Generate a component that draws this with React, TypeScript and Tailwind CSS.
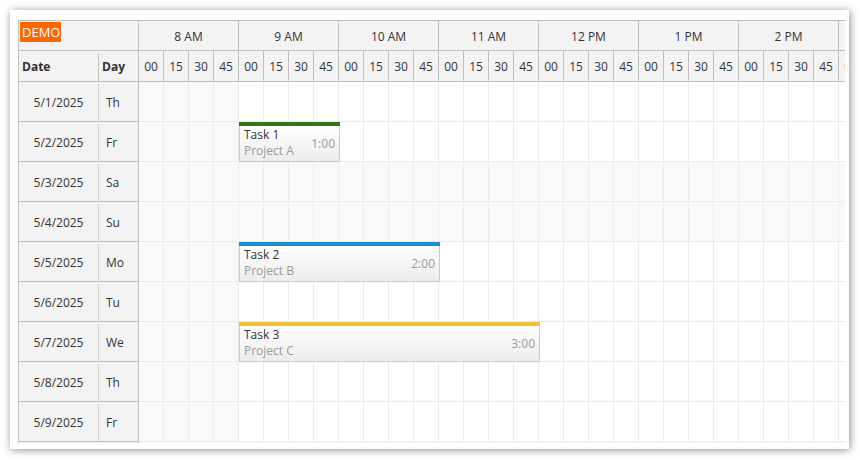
import React from "react";

const rows: [string, string, boolean][] = [
  ["5/1/2025", "Th", false],
  ["5/2/2025", "Fr", false],
  ["5/3/2025", "Sa", true],
  ["5/4/2025", "Su", true],
  ["5/5/2025", "Mo", false],
  ["5/6/2025", "Tu", false],
  ["5/7/2025", "We", false],
  ["5/8/2025", "Th", false],
  ["5/9/2025", "Fr", false],
  ["5/10/2025", "Sa", true],
];

const hours = ["8 AM", "9 AM", "10 AM", "11 AM", "12 PM", "1 PM", "2 PM", "3 PM"];
const minutes = ["00", "15", "30", "45"];

type Ev = { row: number; start: number; len: number; name: string; project: string; dur: string; color: string };
const events: Ev[] = [
  { row: 1, start: 4, len: 4, name: "Task 1", project: "Project A", dur: "1:00", color: "bg-[#38761d]" },
  { row: 4, start: 4, len: 8, name: "Task 2", project: "Project B", dur: "2:00", color: "bg-[#1a8fd6]" },
  { row: 6, start: 4, len: 12, name: "Task 3", project: "Project C", dur: "3:00", color: "bg-[#f1c232]" },
];

function Event({ ev }: { ev: Ev }) {
  return (
    <div
      className="absolute top-0 flex h-[40px] flex-col"
      style={{ left: ev.start * 25, width: ev.len * 25 + 1 }}
    >
      <div className={`h-[4px] shrink-0 ${ev.color}`} />
      <div className="flex flex-1 items-center justify-between border-x border-b border-[#c8c8c8] bg-gradient-to-b from-white to-[#ececec] pl-[4px] pr-[4px]">
        <div className="flex flex-col self-start pt-[1px] leading-[16px]">
          <span className="text-[#333]">{ev.name}</span>
          <span className="text-[#9a9a9a]">{ev.project}</span>
        </div>
        <span className="pt-[1px] text-[#9a9a9a]">{ev.dur}</span>
      </div>
    </div>
  );
}

export default function App() {
  return (
    <div
      className="h-[460px] w-[860px] bg-white p-[10px] text-[12px]"
      style={{ fontFamily: '"Open Sans", "Noto Sans", sans-serif' }}
    >
      <div className="h-[439px] w-[839px] bg-white pl-[8px] pt-[10px] shadow-[1px_1px_8px_rgba(0,0,0,0.45)]">
        <div className="h-[423px] w-[827px] overflow-hidden">
          <div className="flex w-max flex-col border-l border-t border-[#c0c0c0]">
            {/* header */}
            <div className="flex">
              <div className="flex w-[120px] shrink-0 flex-col border-r border-[#c0c0c0] bg-[#f3f3f3]">
                <div className="h-[30px] border-b border-[#c0c0c0] pl-[1px] pt-[1px]">
                  <span className="inline-block h-[20px] w-[41px] bg-[#ff6600] pl-[2px] text-[13px] leading-[20px] text-white">DEMO</span>
                </div>
                <div className="flex h-[31px] border-b border-[#c0c0c0] pt-[2px] font-bold text-[#333]">
                  <div className="flex w-[80px] items-center border-r border-[#c0c0c0] pl-[3px]">Date</div>
                  <div className="flex flex-1 items-center pl-[3px]">Day</div>
                </div>
              </div>
              <div className="flex">
                {hours.map((h) => (
                  <div key={h} className="flex w-[100px] shrink-0 flex-col bg-[#f3f3f3] text-[#333]">
                    <div className="flex h-[30px] items-center justify-center border-b border-r border-[#c0c0c0] pt-[2px]">{h}</div>
                    <div className="flex h-[31px] border-b border-[#c0c0c0]">
                      {minutes.map((m) => (
                        <div key={m} className="flex w-[25px] items-center justify-center border-r border-[#c0c0c0] pt-[2px]">
                          {m}
                        </div>
                      ))}
                    </div>
                  </div>
                ))}
              </div>
            </div>
            {/* rows */}
            {rows.map(([date, day, weekend], ri) => (
              <div key={date} className="flex h-[40px]">
                <div className="flex w-[120px] shrink-0 border-b border-r border-[#c0c0c0] bg-[#f3f3f3] pt-[2px] text-[#333]">
                  <div className="flex w-[80px] items-center justify-center border-r border-[#d4d4d4]">{date}</div>
                  <div className="flex flex-1 items-center pl-[7px]">{day}</div>
                </div>
                <div className="relative flex">
                  {hours.map((h, hi) =>
                    minutes.map((m) => (
                      <div
                        key={h + m}
                        className={`h-[40px] w-[25px] shrink-0 border-b border-r border-[#ececec] ${
                          weekend || hi === 0 ? "bg-[#f9f9f9]" : "bg-white"
                        }`}
                      />
                    ))
                  )}
                  {events
                    .filter((e) => e.row === ri)
                    .map((e) => (
                      <Event key={e.name} ev={e} />
                    ))}
                </div>
              </div>
            ))}
          </div>
        </div>
      </div>
    </div>
  );
}
